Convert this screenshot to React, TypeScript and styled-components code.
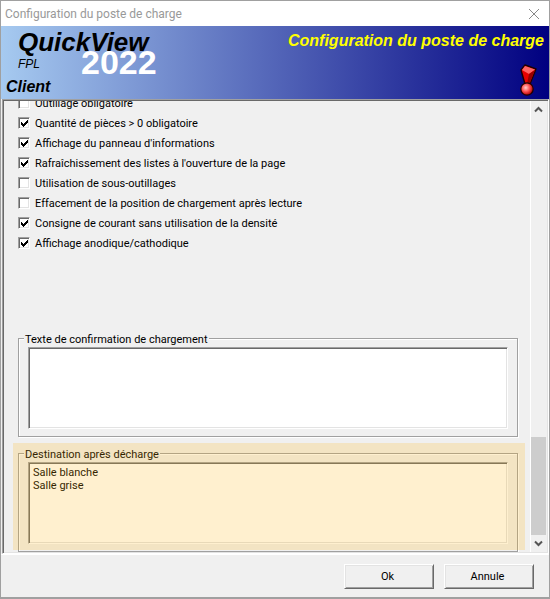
import React from "react";
import styled, { createGlobalStyle } from "styled-components";

const GlobalStyle = createGlobalStyle`
  * { box-sizing: border-box; }
  body {
    margin: 0;
    background: #a0a0a0;
    color: #000;
    font-family: Roboto, "Noto Sans", sans-serif;
    font-size: 11px;
  }
  button, select, textarea { font: inherit; color: inherit; border-radius: 0; }
`;

const Window = styled.div`
  display: flex;
  flex-direction: column;
  height: 100vh;
  border: solid #a0a0a0;
  border-width: 1px 1px 2px;
  background: #f0f0f0;
`;

const TitleBar = styled.div`
  display: flex;
  flex: none;
  align-items: center;
  justify-content: space-between;
  height: 25px;
  padding: 0 9px 0 4px;
  background: #fff;
  color: #999;
  font-size: 12px;
`;

const CloseButton = styled.button`
  display: flex;
  padding: 0;
  border: 0;
  background: none;
  color: #888;
`;

const Banner = styled.header`
  display: flex;
  flex: none;
  justify-content: space-between;
  height: 73px;
  padding: 0 5px;
  background: linear-gradient(90deg, #a6caf0, #000080);
  font-family: "Liberation Sans", sans-serif;
  font-weight: bold;
`;

const Brand = styled.div`
  position: relative;
  display: flex;
  flex-direction: column;
  font-style: italic;
  white-space: nowrap;
`;

const Product = styled.span`
  padding-left: 12px;
  font-size: 26px;
  line-height: 32px;
`;

const Module = styled.span`
  padding-left: 12px;
  font-size: 12px;
  line-height: 12px;
  font-weight: normal;
`;

const Client = styled.span`
  padding-top: 8px;
  font-size: 16px;
  line-height: 18px;
`;

const Year = styled.span`
  position: absolute;
  left: 75px;
  top: 18px;
  color: #fff;
  font-size: 34px;
  line-height: 36px;
  font-style: normal;
`;

const BannerSide = styled.div`
  display: flex;
  flex-direction: column;
  align-items: flex-end;
  justify-content: space-between;
  padding: 5px 0 3px;
`;

const Heading = styled.h1`
  margin: 0;
  color: #ff0;
  font-size: 16px;
  line-height: 20px;
  font-style: italic;
  white-space: nowrap;
`;

const AlertIcon = styled.svg`
  width: 18px;
  height: 32px;
  margin-right: 7px;
`;

const Panel = styled.main`
  display: flex;
  flex: 1;
  min-height: 0;
  margin-left: 1px;
  border: 1px solid;
  border-color: #a0a0a0 #fff #fff #a0a0a0;
  box-shadow: inset 1px 1px 0 #696969, inset -1px -1px 0 #e3e3e3;
  padding: 1px;
`;

const Viewport = styled.div`
  display: flex;
  flex: 1;
  flex-direction: column;
  justify-content: flex-end;
  min-width: 0;
  overflow: hidden;
`;

const Options = styled.div`
  display: flex;
  flex: none;
  flex-direction: column;
  padding: 0 14px;
`;

const OptionLabel = styled.label`
  display: flex;
  align-items: center;
  gap: 5px;
  height: 20px;
  white-space: nowrap;
`;

const CheckBox = styled.span`
  position: relative;
  display: flex;
  width: 12px;
  height: 12px;

  input {
    appearance: none;
    width: 12px;
    height: 12px;
    margin: 0;
    border: 1px solid;
    border-color: #a0a0a0 #fff #fff #a0a0a0;
    background: #fff;
    box-shadow: inset 1px 1px 0 #696969, inset -1px -1px 0 #e3e3e3;
  }
  svg {
    position: absolute;
    left: 3px;
    top: 3px;
    display: none;
    pointer-events: none;
  }
  input:checked + svg { display: block; }
`;

const Section = styled.section<{ $highlight?: boolean }>`
  position: relative;
  flex: none;
  margin: 0 5px 0 9px;
  padding: ${(p) => (p.$highlight ? "1px 7px 0 5px" : "76px 7px 6px 5px")};

  &::after {
    content: "";
    display: ${(p) => (p.$highlight ? "block" : "none")};
    position: absolute;
    inset: 0 0 2px;
    background: rgba(255, 180, 15, 0.2);
    pointer-events: none;
  }
`;

const Group = styled.fieldset`
  min-width: 0;
  margin: 0;
  padding: 0 9px 7px;
  border: 1px solid #a0a0a0;
  box-shadow: 1px 1px 0 #fff, inset 1px 1px 0 #fff;

  legend {
    margin-left: -4px;
    padding: 4px 1px 0;
    background: #f0f0f0;
    line-height: 14px;
  }
`;

const sunken = `
  display: block;
  width: 100%;
  height: 82px;
  margin: 0;
  border: 1px solid;
  border-color: #a0a0a0 #fff #fff #a0a0a0;
  background: #fff;
  box-shadow: inset 1px 1px 0 #696969, inset -1px -1px 0 #e3e3e3;
  outline: 0;
`;

const TextArea = styled.textarea`
  ${sunken}
  padding: 4px;
  resize: none;
`;

const ListBox = styled.select`
  ${sunken}
  padding: 3px 4px;
  overflow: hidden;

  option {
    min-height: 13px;
    padding: 0;
    line-height: 13px;
  }
`;

const ScrollBar = styled.div`
  display: flex;
  flex: none;
  flex-direction: column;
  width: 17px;
  border-left: 1px solid #fff;
`;

const ScrollButton = styled.button`
  display: flex;
  flex: none;
  align-items: center;
  justify-content: center;
  height: 17px;
  padding: 0 2px 0 0;
  border: 0;
  background: none;
`;

const Track = styled.div`
  display: flex;
  flex: 1;
  flex-direction: column;
  justify-content: flex-end;
`;

const Thumb = styled.div`
  height: 98px;
  margin-right: 1px;
  background: #cdcdcd;
`;

const Footer = styled.footer`
  display: flex;
  flex: none;
  justify-content: flex-end;
  gap: 10px;
  padding: 9px 15px 8px;
  border-top: 1px solid #fff;
`;

const PushButton = styled.button`
  width: 90px;
  height: 25px;
  padding: 0 3px 0 0;
  border: 1px solid;
  border-color: #fff #696969 #696969 #fff;
  background: #f0f0f0;
  box-shadow: inset 1px 1px 0 #e3e3e3, inset -1px -1px 0 #a0a0a0;
`;

const options = [
  { label: "Outillage obligatoire", checked: false },
  { label: "Quantité de pièces > 0 obligatoire", checked: true },
  { label: "Affichage du panneau d'informations", checked: true },
  { label: "Rafraîchissement des listes à l'ouverture de la page", checked: true },
  { label: "Utilisation de sous-outillages", checked: false },
  { label: "Effacement de la position de chargement après lecture", checked: false },
  { label: "Consigne de courant sans utilisation de la densité", checked: true },
  { label: "Affichage anodique/cathodique", checked: true },
];

const Arrow = ({ up }: { up?: boolean }) => (
  <svg width="9" height="7" viewBox="0 0 9 7" fill="none" stroke="#555" strokeWidth="2">
    <path d={up ? "M1 5.5 4.5 2 8 5.5" : "M1 1.5 4.5 5 8 1.5"} />
  </svg>
);

export default function App() {
  return (
    <Window>
      <GlobalStyle />
      <TitleBar>
        <span>Configuration du poste de charge</span>
        <CloseButton aria-label="Fermer">
          <svg width="12" height="12" viewBox="0 0 12 12" stroke="currentColor">
            <path d="M1 1 11 11M11 1 1 11" />
          </svg>
        </CloseButton>
      </TitleBar>
      <Banner>
        <Brand>
          <Product>QuickView</Product>
          <Module>FPL</Module>
          <Client>Client</Client>
          <Year>2022</Year>
        </Brand>
        <BannerSide>
          <Heading>Configuration du poste de charge</Heading>
          <AlertIcon viewBox="0 0 18 32" aria-hidden="true">
            <defs>
              <radialGradient id="ball" cx="0.4" cy="0.4" r="0.6">
                <stop offset="0" stopColor="#ffd0d0" />
                <stop offset="0.5" stopColor="#f55" />
                <stop offset="1" stopColor="#b00000" />
              </radialGradient>
            </defs>
            <path d="M6 1 17 5 11 20H6L2 6Z" fill="#e80000" stroke="#200000" strokeWidth="1.4" strokeLinejoin="round" />
            <path d="M6 2 16 5.5 10 10 3 6Z" fill="#ff6464" />
            <path d="M16 6 10 10 8 20H10.5Z" fill="#980000" />
            <circle cx="8" cy="25" r="6.200" fill="url(#ball)" stroke="#200000" strokeWidth="1.200" />
          </AlertIcon>
        </BannerSide>
      </Banner>
      <Panel>
        <Viewport>
          <Options>
            {options.map((option) => (
              <OptionLabel key={option.label}>
                <CheckBox>
                  <input type="checkbox" defaultChecked={option.checked} />
                  <svg width="7" height="7" viewBox="0 0 7 7" shapeRendering="crispEdges">
                    <path d="M0 2H1V3H2V4H3V3H4V2H5V1H6V0H7V3H6V4H5V5H4V6H3V7H2V6H1V5H0Z" />
                  </svg>
                </CheckBox>
                {option.label}
              </OptionLabel>
            ))}
          </Options>
          <Section>
            <Group>
              <legend id="confirmation">Texte de confirmation de chargement</legend>
              <TextArea aria-labelledby="confirmation" />
            </Group>
          </Section>
          <Section $highlight>
            <Group>
              <legend id="destination">Destination après décharge</legend>
              <ListBox size={6} aria-labelledby="destination">
                <option>Salle blanche</option>
                <option>Salle grise</option>
              </ListBox>
            </Group>
          </Section>
        </Viewport>
        <ScrollBar>
          <ScrollButton aria-label="Défiler vers le haut"><Arrow up /></ScrollButton>
          <Track><Thumb /></Track>
          <ScrollButton aria-label="Défiler vers le bas"><Arrow /></ScrollButton>
        </ScrollBar>
      </Panel>
      <Footer>
        <PushButton>Ok</PushButton>
        <PushButton>Annule</PushButton>
      </Footer>
    </Window>
  );
}
